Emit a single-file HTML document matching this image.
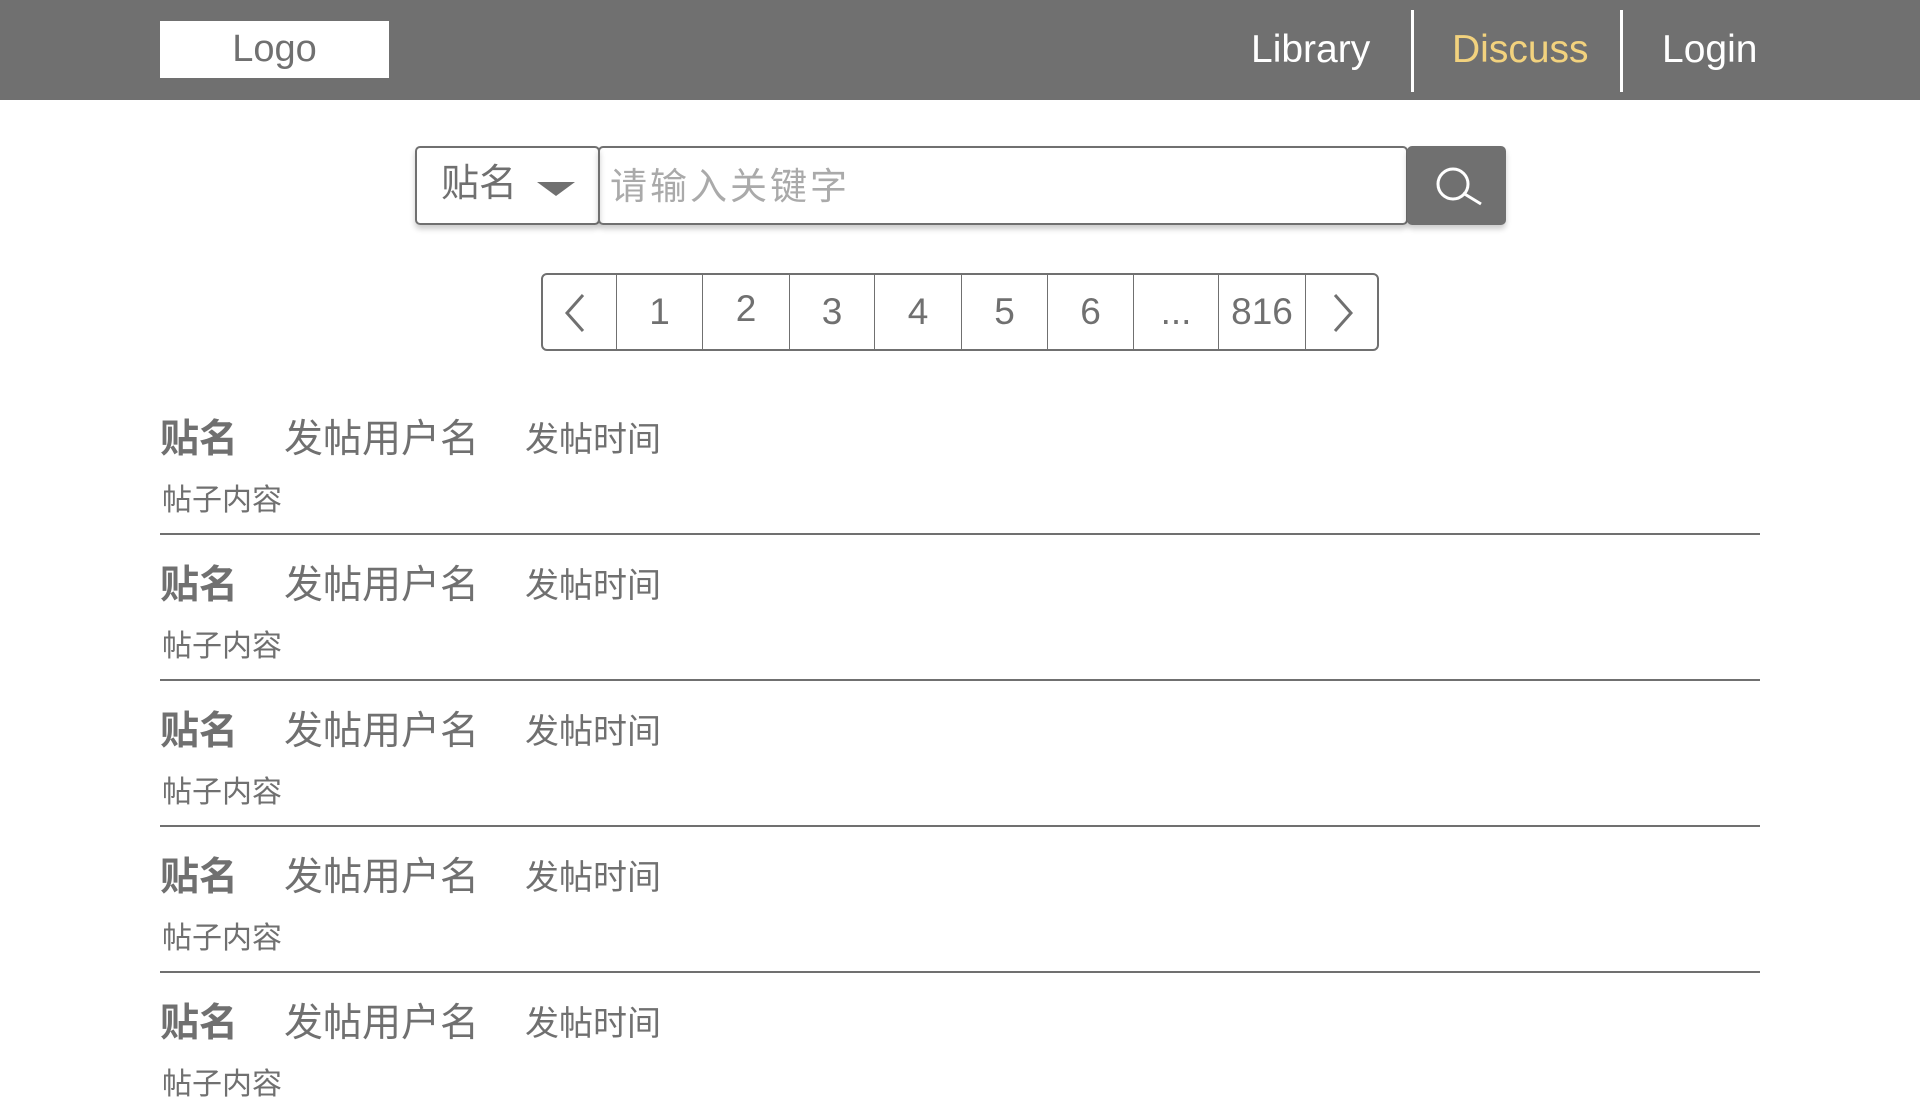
<!DOCTYPE html>
<html><head><meta charset="utf-8"><style>
*{margin:0;padding:0;box-sizing:border-box}
body{width:1920px;height:1080px;overflow:hidden;background:#fff;font-family:"Liberation Sans","Noto Sans CJK SC",sans-serif;color:#707070;position:relative}
.hdr{position:absolute;left:0;top:0;width:1920px;height:100px;background:#707070}
.logo{position:absolute;left:160px;top:21px;width:229px;height:57px;background:#fff;color:#707070;font-size:38px;text-align:center;line-height:57px}
.nav{position:absolute;top:0;height:100px;line-height:100px;font-size:39px;color:#fff}
.div{position:absolute;top:10px;width:3px;height:82px;background:#fff}
.a{position:absolute}
.dd{position:absolute;left:415px;top:146px;width:185px;height:79px;border:2px solid #707070;border-radius:5px;box-shadow:0 4px 6px rgba(0,0,0,.2);font-size:38px;line-height:72px;padding-left:24px}
.tri{position:absolute;left:120px;top:34px;width:0;height:0;border-left:19px solid transparent;border-right:19px solid transparent;border-top:14px solid #707070}
.inp{position:absolute;left:598px;top:146px;width:810px;height:79px;border:2px solid #707070;border-radius:5px;box-shadow:0 4px 6px rgba(0,0,0,.2);font-size:37px;line-height:78px;padding-left:10px;color:#aaa;letter-spacing:3px}
.btn{position:absolute;left:1407px;top:146px;width:99px;height:79px;background:#707070;border-radius:5px;box-shadow:0 4px 6px rgba(0,0,0,.2)}
.pg{position:absolute;left:541px;top:273px;width:838px;height:78px;border:2px solid #707070;border-radius:6px}
.c{position:absolute;top:0;height:74px;line-height:74px;text-align:center;font-size:37px;border-left:1px solid #707070}
.row{position:absolute;left:160px;width:1600px}
.t{position:absolute;top:-25px;font-size:39px;line-height:50px;white-space:nowrap}
.ct{position:absolute;font-size:30px;line-height:36px;left:2px;top:43px;white-space:nowrap}
.ln{position:absolute;left:160px;width:1600px;height:2px;background:#707070}
</style></head><body>
<div class="hdr">
<div class="logo">Logo</div>
<div class="nav" style="left:1251px">Library</div>
<div class="div" style="left:1411px"></div>
<div class="nav" style="left:1452px;color:#f2d27e">Discuss</div>
<div class="div" style="left:1620px"></div>
<div class="nav" style="left:1662px">Login</div>
</div>
<div class="dd">贴名<div class="tri"></div></div>
<div class="inp">请输入关键字</div>
<div class="btn"><svg width="99" height="79" viewBox="0 0 99 79"><circle cx="46" cy="38" r="15" fill="none" stroke="#fff" stroke-width="3"/><line x1="56" y1="47" x2="74" y2="58" stroke="#fff" stroke-width="3"/></svg></div>
<div class="pg">
<svg class="a" style="left:18px;top:18px" width="30" height="40"><polyline points="22,2 6,20 22,38" fill="none" stroke="#707070" stroke-width="3"/></svg>
<div class="c" style="left:73px;width:86px">1</div>
<div class="c" style="left:159px;width:87px;line-height:68px">2</div>
<div class="c" style="left:246px;width:85px">3</div>
<div class="c" style="left:331px;width:87px">4</div>
<div class="c" style="left:418px;width:86px">5</div>
<div class="c" style="left:504px;width:86px">6</div>
<div class="c" style="left:590px;width:85px">...</div>
<div class="c" style="left:675px;width:87px">816</div>
<div class="c" style="left:762px;width:72px"><svg style="margin-top:18px" width="30" height="40"><polyline points="8,2 24,20 8,38" fill="none" stroke="#707070" stroke-width="3"/></svg></div>
</div>
<div class="row" style="top:440px"><span class="t" style="left:0;font-weight:bold">贴名</span><span class="t" style="left:124px">发帖用户名</span><span class="t" style="left:365px;font-size:34px">发帖时间</span><span class="ct">帖子内容</span></div>
<div class="ln" style="top:533px"></div>
<div class="row" style="top:586px"><span class="t" style="left:0;font-weight:bold">贴名</span><span class="t" style="left:124px">发帖用户名</span><span class="t" style="left:365px;font-size:34px">发帖时间</span><span class="ct">帖子内容</span></div>
<div class="ln" style="top:679px"></div>
<div class="row" style="top:732px"><span class="t" style="left:0;font-weight:bold">贴名</span><span class="t" style="left:124px">发帖用户名</span><span class="t" style="left:365px;font-size:34px">发帖时间</span><span class="ct">帖子内容</span></div>
<div class="ln" style="top:825px"></div>
<div class="row" style="top:878px"><span class="t" style="left:0;font-weight:bold">贴名</span><span class="t" style="left:124px">发帖用户名</span><span class="t" style="left:365px;font-size:34px">发帖时间</span><span class="ct">帖子内容</span></div>
<div class="ln" style="top:971px"></div>
<div class="row" style="top:1024px"><span class="t" style="left:0;font-weight:bold">贴名</span><span class="t" style="left:124px">发帖用户名</span><span class="t" style="left:365px;font-size:34px">发帖时间</span><span class="ct">帖子内容</span></div>
</body></html>
